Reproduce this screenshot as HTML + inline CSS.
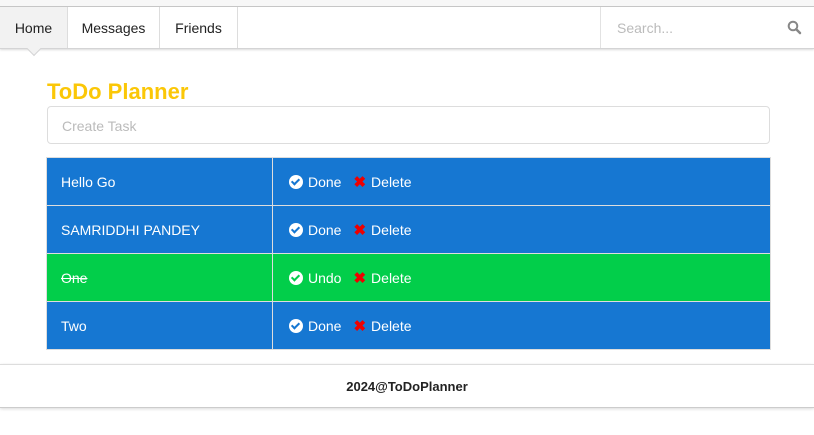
<!DOCTYPE html>
<html><head><style>
*{box-sizing:border-box;margin:0;padding:0}
body{width:814px;height:435px;background:#fff;font-family:"Liberation Sans",sans-serif;position:relative;overflow:hidden}
.top{position:absolute;left:0;top:0;width:814px;height:7px;background:#f7f7f7;border-bottom:1px solid #c8c8c8}
.menu{position:absolute;left:0;top:7px;width:814px;height:42px;border-bottom:1px solid #d4d4d5;box-shadow:0 1px 2px rgba(0,0,0,.15);background:#fff}
.item{position:absolute;top:0;height:41px;line-height:42px;font-size:14px;color:#222;text-align:center;border-right:1px solid #ddd}
.search{position:absolute;left:600px;top:0;width:214px;height:41px;border-left:1px solid #e2e2e2;color:#bbb;font-size:14px;line-height:43px;padding-left:16px}
.arrow{position:absolute;left:29px;top:44px;width:10px;height:10px;background:#f2f2f2;transform:rotate(45deg);border-right:1px solid #d4d4d5;border-bottom:1px solid #d4d4d5}
h1{position:absolute;left:47px;top:79px;font-size:22px;color:#fbc707;font-weight:bold}
.inp{position:absolute;left:47px;top:106px;width:723px;height:38px;border:1px solid #ddd;border-radius:4px;font-size:14px;color:#bbb;line-height:38px;padding-left:14px}
table{position:absolute;left:46px;top:157px;width:725px;border-collapse:collapse}
td{height:48px;border:1px solid #ddd;color:#fff;font-size:14px;padding-left:14px}
td:first-child{width:226px}
td:last-child{padding-left:16px}
.b td{background:#1677d2}.g td{background:#02ce4a}
.ck{display:inline-block;width:14px;height:14px;border-radius:50%;background:#fff;vertical-align:-2px;margin-right:5px;position:relative}
.ck:after{content:"";position:absolute;left:4px;top:2px;width:3px;height:6px;border:solid #1677d2;border-width:0 2px 2px 0;transform:rotate(45deg)}
.g .ck:after{border-color:#02ce4a}
.x{color:#e00;font-weight:bold;margin:0 5px 0 12px;font-size:15px}
.foot{position:absolute;left:0;top:364px;width:814px;height:44px;border-top:1px solid #ddd;border-bottom:1px solid #ccc;box-shadow:0 1px 3px rgba(0,0,0,.15);text-align:center;line-height:43px;font-size:13px;font-weight:bold;color:#222}
</style></head><body>
<div class="top"></div>
<div class="menu">
<div class="item" style="left:0;width:68px;background:#f2f2f2">Home</div>
<div class="item" style="left:68px;width:92px">Messages</div>
<div class="item" style="left:160px;width:78px">Friends</div>
<div class="search">Search...
<svg style="position:absolute;right:12px;top:13px" width="15" height="15" viewBox="0 0 15 15"><circle cx="6" cy="6" r="4.3" fill="none" stroke="#888" stroke-width="2"/><path d="M9.2 9.2L13 13" stroke="#888" stroke-width="2.5" stroke-linecap="round"/></svg></div>
</div>
<div class="arrow"></div>
<h1>ToDo Planner</h1>
<div class="inp">Create Task</div>
<table>
<tr class="b"><td>Hello Go</td><td><span class="ck"></span>Done<span class="x">✖</span>Delete</td></tr>
<tr class="b"><td>SAMRIDDHI PANDEY</td><td><span class="ck"></span>Done<span class="x">✖</span>Delete</td></tr>
<tr class="g"><td><s>One</s></td><td><span class="ck"></span>Undo<span class="x">✖</span>Delete</td></tr>
<tr class="b"><td>Two</td><td><span class="ck"></span>Done<span class="x">✖</span>Delete</td></tr>
</table>
<div class="foot">2024@ToDoPlanner</div>
</body></html>
